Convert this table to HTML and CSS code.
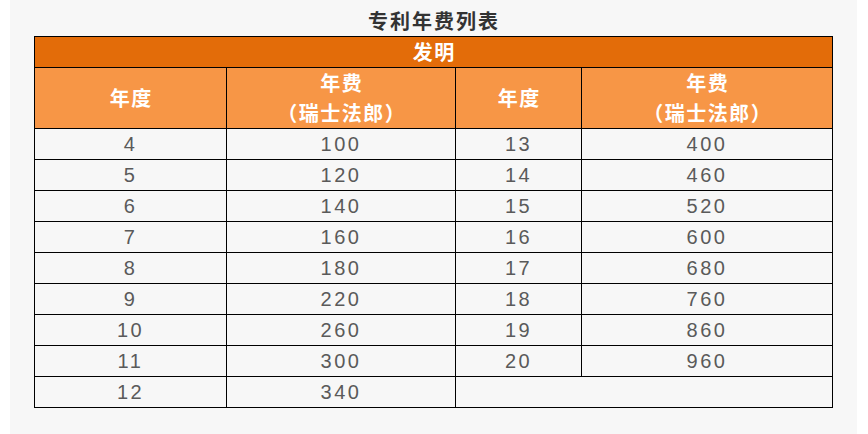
FILE: index.html
```html
<!DOCTYPE html>
<html lang="zh">
<head>
<meta charset="utf-8">
<title>专利年费列表</title>
<link rel="stylesheet" href="styles.css">
</head>
<body>
<div class="panel">
  <h1 class="title">专利年费列表</h1>
  <table class="fees">
    <colgroup>
      <col class="c1"><col class="c2"><col class="c3"><col class="c4">
    </colgroup>
    <thead>
      <tr class="band"><th colspan="4">发明</th></tr>
      <tr class="head">
        <th>年度</th><th>年费<br>（瑞士法郎）</th>
        <th>年度</th><th>年费<br>（瑞士法郎）</th>
      </tr>
    </thead>
    <tbody>
      <tr><td>4</td><td>100</td><td>13</td><td>400</td></tr>
      <tr><td>5</td><td>120</td><td>14</td><td>460</td></tr>
      <tr><td>6</td><td>140</td><td>15</td><td>520</td></tr>
      <tr><td>7</td><td>160</td><td>16</td><td>600</td></tr>
      <tr><td>8</td><td>180</td><td>17</td><td>680</td></tr>
      <tr><td>9</td><td>220</td><td>18</td><td>760</td></tr>
      <tr><td>10</td><td>260</td><td>19</td><td>860</td></tr>
      <tr><td>11</td><td>300</td><td>20</td><td>960</td></tr>
      <tr><td>12</td><td>340</td><td colspan="2"></td></tr>
    </tbody>
  </table>
</div>
</body>
</html>
```
FILE: styles.css
```css
html, body {
  margin: 0;
  padding: 0;
  background: #ffffff;
  height: 100%;
  overflow: hidden;
}
.panel {
  margin-left: 10px;
  width: 847px;
  height: 434px;
  background: #f7f7f7;
  padding: 0 25px 0 24px;
  box-sizing: border-box;
  font-family: "Liberation Sans", "Noto Sans CJK SC", sans-serif;
}
.title {
  margin: 0;
  padding-top: 5px;
  height: 36px;
  line-height: 32px;
  box-sizing: border-box;
  text-align: center;
  font-family: "Noto Sans CJK SC", sans-serif;
  font-size: 20px;
  font-weight: 700;
  letter-spacing: 2px;
  padding-left: 2px;
  color: #333333;
}
.fees {
  border-collapse: collapse;
  table-layout: fixed;
  width: 798px;
}
.c1 { width: 192px; }
.c2 { width: 229px; }
.c3 { width: 126px; }
.c4 { width: 251px; }
.fees th, .fees td {
  border: 1px solid #000000;
  padding: 0;
  text-align: center;
  vertical-align: middle;
  line-height: 30px;
}
.fees th {
  font-family: "Noto Sans CJK SC", sans-serif;
  font-size: 20px;
  font-weight: 700;
  color: #ffffff;
  letter-spacing: 1.5px;
  padding-left: 1.5px;
}
.band th {
  background: #e36c09;
  height: 30px;
}
.head th {
  background: #f79646;
  height: 60px;
}
.fees td {
  height: 30px;
  font-size: 20px;
  color: #5a5a5a;
  letter-spacing: 2.5px;
}
```
